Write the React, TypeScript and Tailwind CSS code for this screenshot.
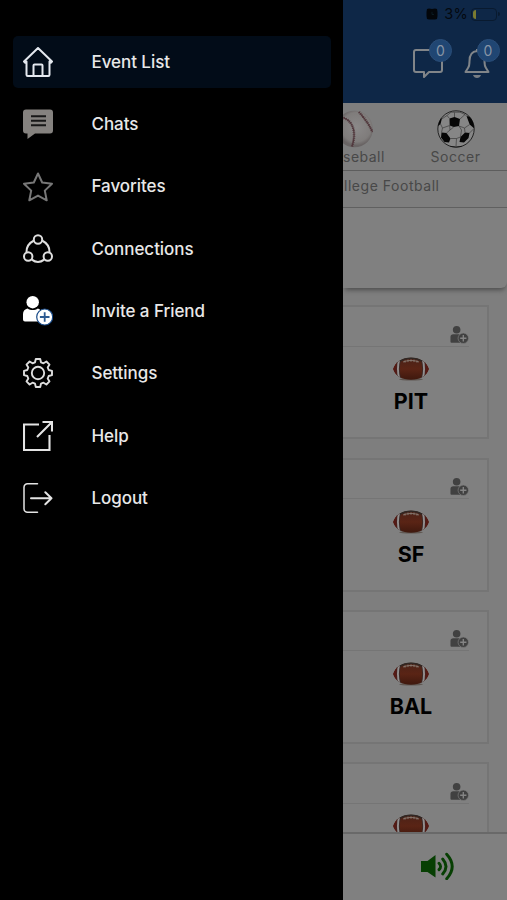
import type { ReactNode } from "react";

interface MenuItem {
  label: string;
  icon: ReactNode;
  active?: boolean;
}

const MENU_ITEMS: MenuItem[] = [
  { label: "Event List", icon: <HomeIcon />, active: true },
  { label: "Chats", icon: <ChatsIcon /> },
  { label: "Favorites", icon: <StarIcon /> },
  { label: "Connections", icon: <ConnectionsIcon /> },
  { label: "Invite a Friend", icon: <InviteIcon /> },
  { label: "Settings", icon: <SettingsIcon /> },
  { label: "Help", icon: <HelpIcon /> },
  { label: "Logout", icon: <LogoutIcon /> },
];

const TEAMS = ["PIT", "SF", "BAL"];

function HomeIcon() {
  return (
    <svg viewBox="0 0 30 30" className="size-[30px]" fill="none" stroke="#e4e8ee" strokeWidth="2" strokeLinejoin="round" strokeLinecap="round">
      <path d="M1 14.5 15 1l14 13.5-1.2 1.2-1.3-1.2v13.2a1.2 1.2 0 0 1-1.2 1.2H4.7a1.2 1.2 0 0 1-1.2-1.2V14.5l-1.3 1.2z" />
      <path d="M10.5 28.5V18.5a1 1 0 0 1 1-1h7a1 1 0 0 1 1 1v10" />
    </svg>
  );
}

function ChatsIcon() {
  return (
    <svg viewBox="0 0 30 30" className="size-[30px]">
      <path d="M3 .5h24a3 3 0 0 1 3 3v18a3 3 0 0 1-3 3H12L4.5 30v-5.5H3a3 3 0 0 1-3-3v-18a3 3 0 0 1 3-3z" fill="#85827f" />
      <path d="M8 7.2h15M8 11.7h15M8 16.2h15" stroke="#171717" strokeWidth="2" />
    </svg>
  );
}

function StarIcon() {
  return (
    <svg viewBox="0 0 30 30" className="size-[30px]" fill="none" stroke="#777" strokeWidth="2" strokeLinejoin="round">
      <path d="m15 1.5 4.2 9 9.8 1.2-7.2 6.9 1.9 9.7-8.7-4.7-8.7 4.7 1.9-9.7L1 11.7l9.8-1.2z" />
    </svg>
  );
}

function ConnectionsIcon() {
  return (
    <svg viewBox="0 0 30 30" className="size-[30px]" fill="none" stroke="#dedede" strokeWidth="2">
      <circle cx="15" cy="5.5" r="4.2" />
      <circle cx="5.2" cy="22.5" r="4.2" />
      <circle cx="24.8" cy="22.5" r="4.2" />
      <path d="M11 6.5C6 9 3.3 13.5 3.5 18.6M19 6.5c5 2.5 7.7 7 7.5 12.1M8.8 25.6c4 3 8.4 3 12.4 0" />
    </svg>
  );
}

function InviteIcon() {
  return (
    <svg viewBox="0 0 30 30" className="size-[30px]">
      <circle cx="9.7" cy="6.2" r="6.2" fill="#fff" />
      <path d="M4.5 12.5c3.2 2 7.2 2 10.4 0 2.2.7 4.1 2.5 4.1 5.5v7.5H2a2 2 0 0 1-2-2V18c0-3 2-5 4.5-5.5z" fill="#fff" />
      <circle cx="21.7" cy="21" r="8" fill="#fff" stroke="#174987" strokeWidth="1.2" />
      <path d="M21.7 16.2v9.6M16.9 21h9.6" stroke="#2d5b92" strokeWidth="1.8" />
    </svg>
  );
}

function SettingsIcon() {
  return (
    <svg viewBox="0 0 30 30" className="size-[30px]" fill="none" stroke="#dedede" strokeWidth="1.9" strokeLinejoin="round">
      <circle cx="15" cy="15" r="6.2" />
      <path d="M12.8 1h4.4l.8 3.3 2.5 1 2.9-1.8 3.1 3.1-1.8 2.9 1 2.5 3.3.8v4.4l-3.3.8-1 2.5 1.8 2.9-3.1 3.1-2.9-1.8-2.5 1-.8 3.3h-4.4l-.8-3.3-2.5-1-2.9 1.8-3.1-3.1 1.8-2.9-1-2.5-3.3-.8v-4.4l3.3-.8 1-2.5-1.8-2.9 3.1-3.1 2.9 1.8 2.5-1z" />
    </svg>
  );
}

function HelpIcon() {
  return (
    <svg viewBox="0 0 30 30" className="size-[30px]" fill="none" stroke="#e4e4e4" strokeWidth="2.1">
      <path d="M16 3.5H1v25.5h25.5V14" />
      <path d="M14 16 29 1M19.5 1H29v9.5" />
    </svg>
  );
}

function LogoutIcon() {
  return (
    <svg viewBox="0 0 30 30" className="size-[30px]" fill="none" stroke="#e4e4e4" strokeLinecap="round" strokeLinejoin="round">
      <path d="M14.5.8h-10A3.5 3.5 0 0 0 1 4.3v21.4a3.5 3.5 0 0 0 3.5 3.5h10" strokeWidth="1.5" />
      <path d="M8 15.2h20.5m-6.2-6 6.2 6-6.2 6" strokeWidth="2" />
    </svg>
  );
}

function PersonAddIcon() {
  return (
    <svg viewBox="0 0 20 20" className="size-[19px]">
      <circle cx="7" cy="4" r="4" fill="#414141" />
      <path d="M3.5 8.700h6l2 1.500-1.500 3 1 4.500H1.500a1 1 0 0 1-1-1v-5a3 3 0 0 1 3-3z" fill="#414141" />
      <circle cx="14" cy="12.900" r="5.5" fill="#414141" stroke="#7e7e7e" strokeWidth=".7" />
      <path d="M14 9.600v6.600M10.7 12.900h6.600" stroke="#858585" strokeWidth="1.4" />
    </svg>
  );
}

function FootballIcon() {
  return (
    <svg viewBox="0 0 36 24" className="h-6 w-9">
      <defs>
        <linearGradient id="leather" x1="0" y1="0" x2="0" y2="1">
          <stop offset="0" stopColor="#492218" />
          <stop offset=".5" stopColor="#5a2415" />
          <stop offset="1" stopColor="#3b170d" />
        </linearGradient>
        <clipPath id="ball">
          <path d="M.2 12C2.5 5 9 .8 18 .8S33.5 5 35.8 12C33.5 19 27 22.8 18 22.8S2.5 19 .2 12z" />
        </clipPath>
      </defs>
      <ellipse cx="18" cy="22.3" rx="12" ry="1.3" fill="#5f5752" />
      <g clipPath="url(#ball)">
        <rect width="36" height="24" fill="url(#leather)" />
        <path d="M0 0h4v24H0zM32 0h4v24h-4z" fill="#551a15" />
        <path d="M6.5 2C4.6 9 4.6 15 6.5 22M29.5 2c1.9 7 1.9 13 0 20" fill="none" stroke="#3a2a28" strokeWidth="3.2" />
        <path d="M6.3 2C4.4 9 4.4 15 6.3 22M29.7 2c1.9 7 1.9 13 0 20" fill="none" stroke="#938e8e" strokeWidth="1.9" />
      </g>
      <path d="M7 4.3C13 .2 23 .2 29 4.3" fill="none" stroke="#302723" strokeWidth="1.3" />
      <path d="M10 5c5-2 11-2 16 0M12 3.4v2.3M15 2.6v2.5M18 2.3v2.5M21 2.6v2.5M24 3.4v2.3" fill="none" stroke="#8b8178" strokeWidth=".8" />
    </svg>
  );
}

function BaseballIcon() {
  return (
    <svg viewBox="0 0 38 38" className="-ml-2 size-[38px]">
      <defs>
        <radialGradient id="baseball" cx=".55" cy=".45">
          <stop offset="0" stopColor="#8b8989" />
          <stop offset=".8" stopColor="#7f7c7b" />
          <stop offset="1" stopColor="#696464" />
        </radialGradient>
      </defs>
      <circle cx="19.5" cy="19" r="18.3" fill="url(#baseball)" />
      <g fill="none" stroke="#50363b">
        <path d="M5 7c13 2 17 15 12 29.500M24 2c5 6 9 10 13.500 20" strokeWidth="1.100" />
        <path d="M5 7c13 2 17 15 12 29.500M24 2c5 6 9 10 13.500 20" strokeWidth="2.600" strokeDasharray=".8 1.200" />
      </g>
    </svg>
  );
}

function SoccerIcon() {
  return (
    <svg viewBox="0 0 38 38" className="size-[38px]">
      <clipPath id="soccer">
        <circle cx="19" cy="19" r="18.3" />
      </clipPath>
      <circle cx="19" cy="19" r="18.2" fill="#868686" stroke="#181818" strokeWidth=".9" />
      <g clipPath="url(#soccer)">
        <path
          d="M12.5 8.500 17.500 7l5.500 2-1 7-5.300 1-4-1.500zM29.500 6l4.500 1 5 9-2.300 2-4-3.500zM3 6l1.800 3L3.500 14-1 18zM4.500 22.500l5 .5 4 5.500-1.500 4-4.500-.500L4 27.500zM23.500 27l4.500-4.500 4.500.5-1 5-4.500 4.500-4.500-.500zM13 36l6 .700 6-.700v3H13z"
          fill="#060606"
        />
        <path
          d="M12.500 8.500 10 5.500 4.800 9M10 5.500 14 2.200h9l5 2.300 1.500 1.500M17.500 7V2.500M23 9l5-4.500M22 16l5.500 2 5.200-3.500M27.500 18l.500 4.500M16.700 17 13 20l-3.500 3M22 16l2.500 4-1 7M13 20l-.300-4.500L5.500 18 3.500 14M5.500 18l-1 4.500M13.500 28.500h6l4-1.500M19.500 28.500 19 36.500M32.500 23l4-4"
          fill="none"
          stroke="#3c3c3c"
          strokeWidth=".7"
        />
      </g>
    </svg>
  );
}

function SpeakerIcon() {
  return (
    <svg viewBox="0 0 34 28" className="h-7 w-[34px]">
      <path d="M0 9h6.500L14.5 3v22.500L6.500 20H0z" fill="#073f03" />
      <path d="M18 11.200q3.200 3.200 0 6.400M21.7 7q6.600 7.500 0 15M25.7 2.200q11 12.300 0 24.600" fill="none" stroke="#073f03" strokeWidth="2.9" strokeLinecap="round" />
    </svg>
  );
}

function Badge({ className }: { className: string }) {
  return (
    <span
      className={`absolute -top-[9px] flex size-[23px] items-center justify-center rounded-full border border-[#2a4d78] bg-[#204673] text-[14px] text-[#8794a5] ${className}`}
    >
      0
    </span>
  );
}

function Sidebar() {
  return (
    <nav className="flex w-[343px] shrink-0 flex-col gap-[10.3px] bg-black pt-9 pr-3 pl-[13px]">
      {MENU_ITEMS.map((item) => (
        <a
          key={item.label}
          className={`flex h-[52px] shrink-0 items-center gap-[39px] rounded-[5px] pl-[9.5px] text-[17px] font-medium tracking-[-0.06px] text-[#e8e8e8] ${
            item.active ? "bg-[#020c18]" : ""
          }`}
        >
          {item.icon}
          <span className="pt-px">{item.label}</span>
        </a>
      ))}
    </nav>
  );
}

function Header() {
  return (
    <header className="flex h-[103px] shrink-0 flex-col bg-[#0e2747]">
      <div className="flex h-7 items-center justify-end pr-[7px] text-[14.5px] text-[#04090f]">
        <svg viewBox="0 0 12 12" className="mr-[6px] size-3">
          <path d="M1 1l2-.500 3 .500 3-.500 2 .500.500 3v4l-.500 3-2 .500H3L1 11 .5 8V4z" fill="#03060a" />
          <path d="M6 3.800V6.500H8" fill="none" stroke="#0d2027" strokeWidth=".8" />
        </svg>
        <span className="mr-[3px] tracking-[0.300px]">3%</span>
        <span className="flex h-[13px] w-[26px] rounded-[4px] border border-[#091a2f] p-px">
          <span className="h-full w-[3px] rounded-l-sm bg-[#7a7b31]" />
        </span>
        <span className="ml-px h-1 w-[2px] rounded-r bg-[#091a2f]" />
      </div>
      <div className="flex justify-end gap-[21px] pt-5 pr-[17.5px]">
        <div className="relative">
          <svg viewBox="0 0 30 31" className="h-[31px] w-[30px]" fill="none" stroke="#818589" strokeWidth="2" strokeLinejoin="round">
            <path d="M3 2h24a2 2 0 0 1 2 2v18a2 2 0 0 1-2 2H16l-5 5v-5H3a2 2 0 0 1-2-2V4a2 2 0 0 1 2-2z" />
          </svg>
          <Badge className="left-[16.5px]" />
        </div>
        <div className="relative w-[26px]">
          <svg viewBox="0 0 26 31" className="h-[31px] w-[26px]" fill="none" stroke="#818589" strokeWidth="2" strokeLinejoin="round">
            <path d="M1.5 24 4 20q1.5-2 1.5-7c0-6 3-9.5 7.5-10 4.5.5 7.500 4 7.500 10q0 5 1.500 7l2.500 4z" />
            <path d="M9 27h8q-1 3-4 3t-4-3z" fill="#777d84" stroke="none" />
            <path d="M13 3V1" />
          </svg>
          <Badge className="left-[13px]" />
        </div>
      </div>
    </header>
  );
}

function SportTabs() {
  return (
    <>
      <div className="flex h-[68px] shrink-0 justify-between border-b border-[#5d5d5d] pt-[7px] pr-[9.5px] text-[14px] leading-[17px] tracking-[0.5px] text-[#484848]">
        <div className="flex flex-col items-start">
          <BaseballIcon />
          <span>seball</span>
        </div>
        <div className="flex w-[84px] shrink-0 flex-col items-center">
          <SoccerIcon />
          <span>Soccer</span>
        </div>
      </div>
      <div className="flex h-[37px] shrink-0 justify-end border-b border-[#606060] pt-[6px] pr-[67.5px] text-[14px] leading-[17px] tracking-[0.53px] whitespace-nowrap text-[#484848]">
        llege Football
      </div>
    </>
  );
}

function EventCard({ team }: { team?: string }) {
  return (
    <article className="h-[134px] w-[146px] shrink-0 border-y-2 border-r-2 border-[#757575] bg-[#808080]">
      <div className="mr-[18px] flex h-[39.5px] items-end justify-end border-b border-[#757575] pb-px">
        <PersonAddIcon />
      </div>
      <div className="ml-[-8px] flex flex-col items-center pt-[10.5px]">
        <FootballIcon />
        {team && <span className="mt-[6px] text-[21.5px] leading-[28px] font-bold text-black">{team}</span>}
      </div>
    </article>
  );
}

export default function App() {
  return (
    <div className="flex h-[900px] w-[507px] overflow-hidden bg-black font-['Inter',sans-serif]">
      <Sidebar />
      <main className="flex w-[164px] shrink-0 flex-col overflow-hidden bg-[#7e7e7e]">
        <Header />
        <SportTabs />
        <div className="z-10 h-20 shrink-0 rounded-br-md bg-[#808080] shadow-[0_4px_5px_-2px_#4c4c4c]" />
        <div className="flex min-h-0 flex-1 flex-col gap-[18.3px] overflow-hidden pt-[17.3px]">
          {TEAMS.map((team) => (
            <EventCard key={team} team={team} />
          ))}
          <EventCard />
        </div>
        <footer className="flex h-[68px] shrink-0 justify-center border-t-2 border-[#696969] bg-[#808080] pt-[18px] pl-[25px]">
          <SpeakerIcon />
        </footer>
      </main>
    </div>
  );
}
